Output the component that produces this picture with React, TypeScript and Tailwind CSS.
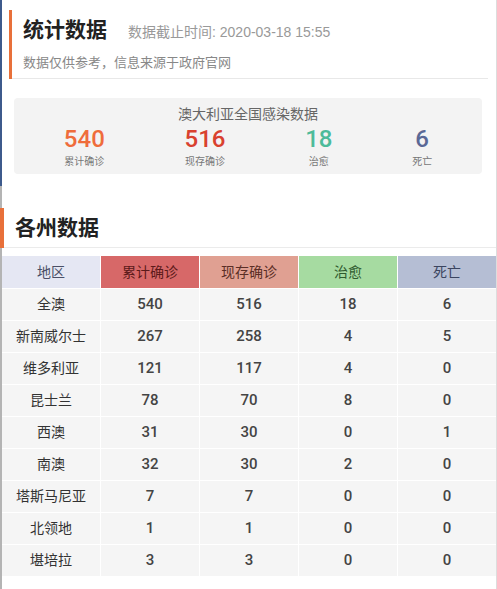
import React from 'react';

const summary = [
  { value: '540', label: '累计确诊', color: 'text-[#ef6c3b]' },
  { value: '516', label: '现存确诊', color: 'text-[#d9412f]' },
  { value: '18', label: '治愈', color: 'text-[#4dbb9a]' },
  { value: '6', label: '死亡', color: 'text-[#5a6896]' },
];

const headers = [
  { label: '地区', className: 'bg-[#e5e7f3] text-[#4a4f66]' },
  { label: '累计确诊', className: 'bg-[#d76868] text-[#5c1a1a]' },
  { label: '现存确诊', className: 'bg-[#e0a092] text-[#5a2e26]' },
  { label: '治愈', className: 'bg-[#a6dba1] text-[#2f5a2f]' },
  { label: '死亡', className: 'bg-[#b5bed4] text-[#3b4560]' },
];

const rows: [string, number, number, number, number][] = [
  ['全澳', 540, 516, 18, 6],
  ['新南威尔士', 267, 258, 4, 5],
  ['维多利亚', 121, 117, 4, 0],
  ['昆士兰', 78, 70, 8, 0],
  ['西澳', 31, 30, 0, 1],
  ['南澳', 32, 30, 2, 0],
  ['塔斯马尼亚', 7, 7, 0, 0],
  ['北领地', 1, 1, 0, 0],
  ['堪培拉', 3, 3, 0, 0],
];

const numFont = { fontFamily: "Roboto, 'Liberation Sans', sans-serif" };

const App: React.FC = () => {
  return (
    <div
      className="min-h-[589px] w-full bg-white pl-[2px] border-r border-[#dddddd] bg-no-repeat bg-[length:2px_100%] bg-[linear-gradient(to_bottom,#3d5a8c_0,#3d5a8c_186px,#b4b4b4_186px,#b4b4b4_100%)]"
      style={{ fontFamily: "'Liberation Sans', 'Noto Sans CJK SC', sans-serif" }}
    >
      {/* header */}
      <div className="ml-[7px] mr-[8px] pt-[10px]">
        <div className="border-l-[3px] border-[#e8703a]">
          <div className="border-b border-[#e8e8e8] pl-[11px] pt-[6px] pb-[6px]">
            <div className="flex items-baseline">
              <h1 className="text-[21px] leading-[28px] font-bold text-[#222]">统计数据</h1>
              <span className="ml-[21px] text-[14px] text-[#999]">数据截止时间: 2020-03-18 15:55</span>
            </div>
            <p className="mt-[10px] text-[13px] leading-[18px] text-[#888]">数据仅供参考，信息来源于政府官网</p>
          </div>
        </div>
      </div>

      {/* national summary */}
      <div className="mt-[19px] ml-[12px] mr-[14px] rounded bg-[#f3f3f3] px-[10px] pt-[6px] pb-[5px]">
        <div className="text-center text-[14px] leading-[20px] text-[#666]">澳大利亚全国感染数据</div>
        <div className="flex justify-around">
          {summary.map((s) => (
            <div key={s.label} className="flex flex-col items-center">
              <span style={numFont} className={`text-[24px] leading-[30px] font-medium ${s.color}`}>{s.value}</span>
              <span className="mt-[1px] text-[10px] leading-[14px] text-[#777]">{s.label}</span>
            </div>
          ))}
        </div>
      </div>

      {/* states */}
      <div className="mt-[34px] -ml-[2px] border-l-4 border-[#e8703a]">
        <div className="border-b border-[#ebebeb] pl-[11px]">
          <h2 className="text-[21px] leading-[39px] font-semibold text-[#222]">各州数据</h2>
        </div>
      </div>

      <div className="mt-[8px] grid grid-cols-5 gap-px bg-white">
        {headers.map((h) => (
          <div key={h.label} className={`h-[32px] flex items-center justify-center text-[14px] ${h.className}`}>
            {h.label}
          </div>
        ))}
        {rows.map((r) => (
          <React.Fragment key={r[0]}>
            <div className="h-[31px] flex items-center justify-center bg-[#f5f5f5] text-[14px] text-[#333]">{r[0]}</div>
            {r.slice(1).map((v, i) => (
              <div
                key={i}
                style={numFont}
                className="h-[31px] flex items-center justify-center bg-[#f5f5f5] text-[15px] font-medium text-[#444]"
              >
                {v}
              </div>
            ))}
          </React.Fragment>
        ))}
      </div>
    </div>
  );
};

export default App;
